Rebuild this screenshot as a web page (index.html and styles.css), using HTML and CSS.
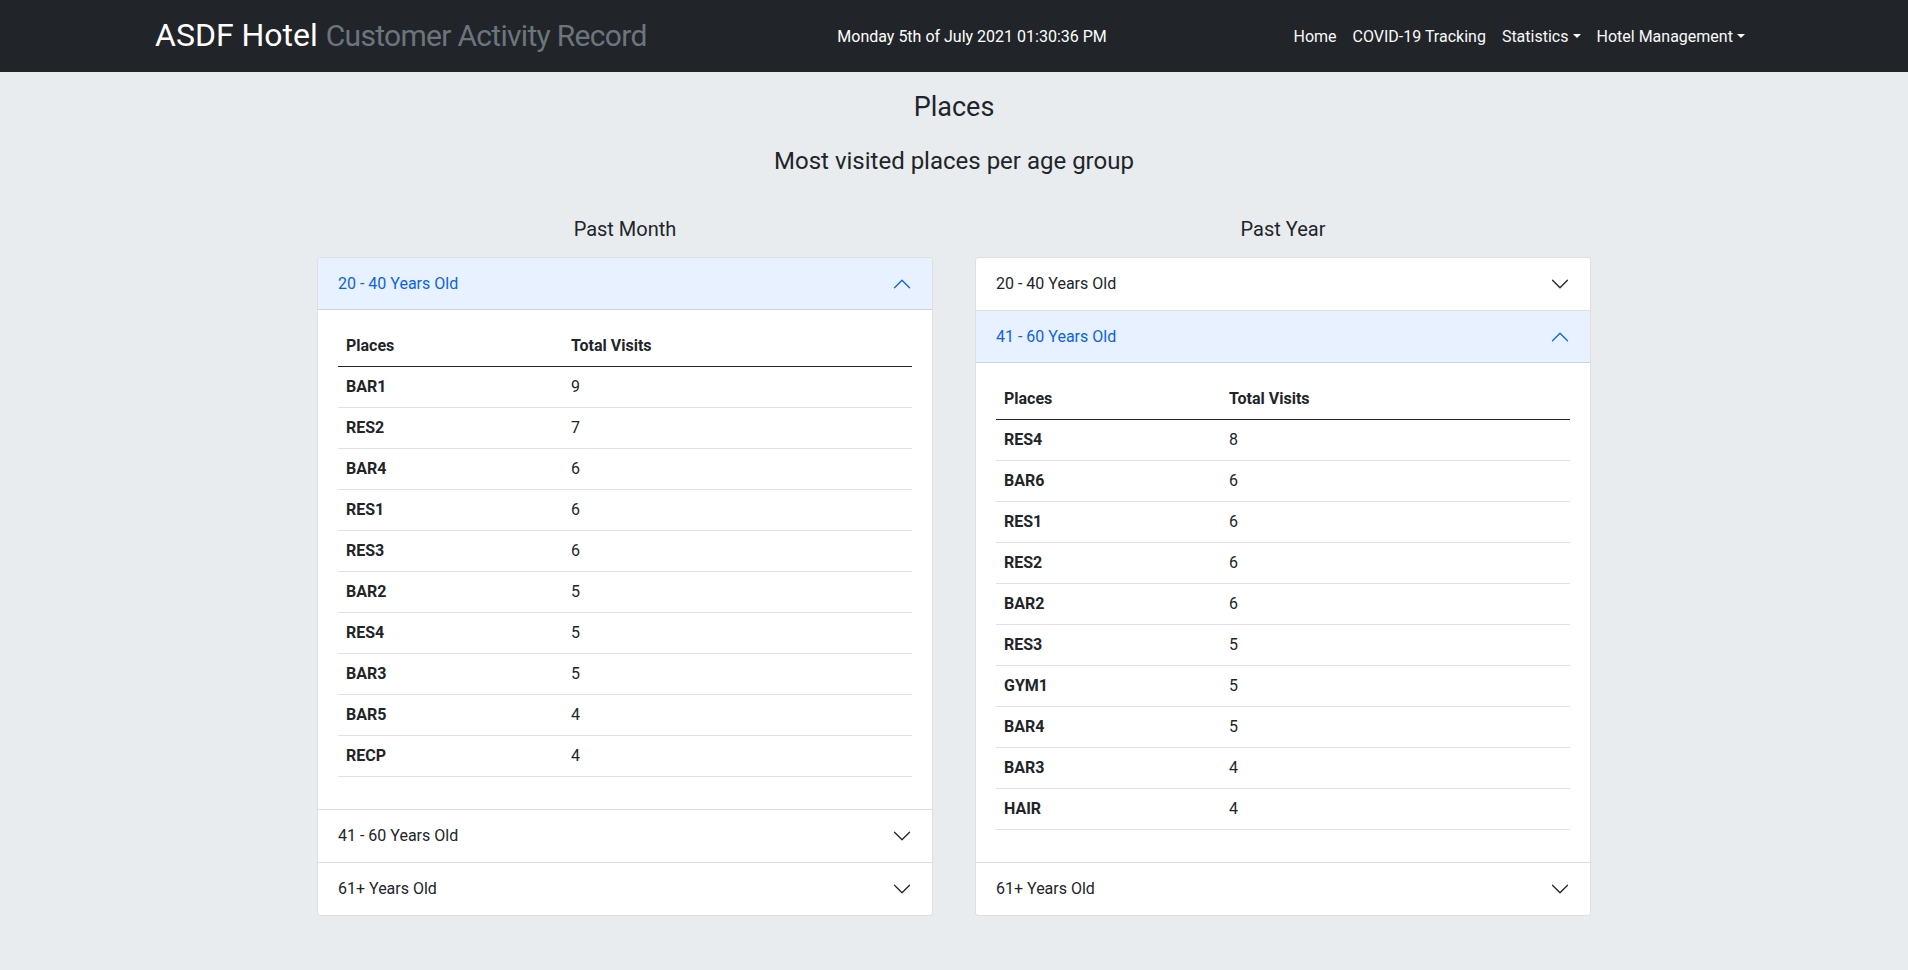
FILE: index.html
```html
<!DOCTYPE html>
<html lang="en">
<head>
<meta charset="utf-8">
<title>ASDF Hotel - Places</title>
<link rel="stylesheet" href="styles.css">
</head>
<body>
<nav class="navbar">
  <div class="nav-inner">
    <a class="brand" href="#">ASDF Hotel <span class="brand-sub">Customer Activity Record</span></a>
    <div class="clock">Monday 5th of July 2021 01:30:36 PM</div>
    <ul class="nav-links">
      <li><a class="nav-link" href="#">Home</a></li>
      <li><a class="nav-link" href="#">COVID-19 Tracking</a></li>
      <li><a class="nav-link dropdown" href="#">Statistics</a></li>
      <li><a class="nav-link dropdown" href="#">Hotel Management</a></li>
    </ul>
  </div>
</nav>

<main class="page">
  <h2 class="title">Places</h2>
  <h4 class="subtitle">Most visited places per age group</h4>

  <div class="columns">
    <section class="column">
      <h5 class="col-title">Past Month</h5>
      <div class="accordion">
        <div class="acc-item">
          <button class="acc-btn active">20 - 40 Years Old
            <svg class="chev" viewBox="0 0 16 16"><path d="M1.646 4.646a.5.5 0 0 1 .708 0L8 10.293l5.646-5.647a.5.5 0 0 1 .708.708l-6 6a.5.5 0 0 1-.708 0l-6-6a.5.5 0 0 1 0-.708z"/></svg>
          </button>
          <div class="acc-body">
            <table class="table">
              <thead><tr><th class="c1">Places</th><th>Total Visits</th></tr></thead>
              <tbody>
                <tr><th>BAR1</th><td>9</td></tr>
                <tr><th>RES2</th><td>7</td></tr>
                <tr><th>BAR4</th><td>6</td></tr>
                <tr><th>RES1</th><td>6</td></tr>
                <tr><th>RES3</th><td>6</td></tr>
                <tr><th>BAR2</th><td>5</td></tr>
                <tr><th>RES4</th><td>5</td></tr>
                <tr><th>BAR3</th><td>5</td></tr>
                <tr><th>BAR5</th><td>4</td></tr>
                <tr><th>RECP</th><td>4</td></tr>
              </tbody>
            </table>
          </div>
        </div>
        <div class="acc-item">
          <button class="acc-btn">41 - 60 Years Old
            <svg class="chev" viewBox="0 0 16 16"><path d="M1.646 4.646a.5.5 0 0 1 .708 0L8 10.293l5.646-5.647a.5.5 0 0 1 .708.708l-6 6a.5.5 0 0 1-.708 0l-6-6a.5.5 0 0 1 0-.708z"/></svg>
          </button>
        </div>
        <div class="acc-item">
          <button class="acc-btn">61+ Years Old
            <svg class="chev" viewBox="0 0 16 16"><path d="M1.646 4.646a.5.5 0 0 1 .708 0L8 10.293l5.646-5.647a.5.5 0 0 1 .708.708l-6 6a.5.5 0 0 1-.708 0l-6-6a.5.5 0 0 1 0-.708z"/></svg>
          </button>
        </div>
      </div>
    </section>

    <section class="column">
      <h5 class="col-title">Past Year</h5>
      <div class="accordion">
        <div class="acc-item">
          <button class="acc-btn">20 - 40 Years Old
            <svg class="chev" viewBox="0 0 16 16"><path d="M1.646 4.646a.5.5 0 0 1 .708 0L8 10.293l5.646-5.647a.5.5 0 0 1 .708.708l-6 6a.5.5 0 0 1-.708 0l-6-6a.5.5 0 0 1 0-.708z"/></svg>
          </button>
        </div>
        <div class="acc-item">
          <button class="acc-btn active">41 - 60 Years Old
            <svg class="chev" viewBox="0 0 16 16"><path d="M1.646 4.646a.5.5 0 0 1 .708 0L8 10.293l5.646-5.647a.5.5 0 0 1 .708.708l-6 6a.5.5 0 0 1-.708 0l-6-6a.5.5 0 0 1 0-.708z"/></svg>
          </button>
          <div class="acc-body">
            <table class="table">
              <thead><tr><th class="c1">Places</th><th>Total Visits</th></tr></thead>
              <tbody>
                <tr><th>RES4</th><td>8</td></tr>
                <tr><th>BAR6</th><td>6</td></tr>
                <tr><th>RES1</th><td>6</td></tr>
                <tr><th>RES2</th><td>6</td></tr>
                <tr><th>BAR2</th><td>6</td></tr>
                <tr><th>RES3</th><td>5</td></tr>
                <tr><th>GYM1</th><td>5</td></tr>
                <tr><th>BAR4</th><td>5</td></tr>
                <tr><th>BAR3</th><td>4</td></tr>
                <tr><th>HAIR</th><td>4</td></tr>
              </tbody>
            </table>
          </div>
        </div>
        <div class="acc-item">
          <button class="acc-btn">61+ Years Old
            <svg class="chev" viewBox="0 0 16 16"><path d="M1.646 4.646a.5.5 0 0 1 .708 0L8 10.293l5.646-5.647a.5.5 0 0 1 .708.708l-6 6a.5.5 0 0 1-.708 0l-6-6a.5.5 0 0 1 0-.708z"/></svg>
          </button>
        </div>
      </div>
    </section>
  </div>
</main>
</body>
</html>
```

FILE: styles.css
```css
* { box-sizing: border-box; }

html, body {
  margin: 0;
  padding: 0;
}

body {
  font-family: Roboto, "Liberation Sans", sans-serif;
  font-size: 16px;
  line-height: 1.5;
  color: #212529;
  background: #e9ecef;
  min-height: 970px;
}

/* ---------- Navbar ---------- */
.navbar {
  background: #212529;
  height: 72px;
}

.nav-inner {
  height: 72px;
  margin: 0 155px;
  padding-top: 2px;
  display: flex;
  align-items: center;
}

.brand {
  color: #fff;
  text-decoration: none;
  font-size: 32px;
  line-height: 40px;
  white-space: nowrap;
  margin-top: -4px;
}

.brand-sub {
  color: #6c757d;
  font-size: 30px;
  letter-spacing: -0.7px;
}

.clock {
  flex: 1;
  text-align: center;
  color: #fff;
  padding-left: 12px;
  white-space: nowrap;
}

.nav-links {
  list-style: none;
  margin: 0;
  padding: 0;
  display: flex;
}

.nav-link {
  display: block;
  padding: 8px;
  color: #f8f9fa;
  text-decoration: none;
  white-space: nowrap;
}

.dropdown::after {
  content: "";
  display: inline-block;
  margin-left: .255em;
  vertical-align: .255em;
  border-top: .3em solid;
  border-right: .3em solid transparent;
  border-left: .3em solid transparent;
  border-bottom: 0;
}

/* ---------- Page ---------- */
.page {
  display: flex;
  flex-direction: column;
  align-items: center;
}

.title {
  margin: 16px 0 0;
  font-size: 27px;
  line-height: 38px;
  font-weight: 400;
}

.subtitle {
  margin: 21px 0 0;
  font-size: 24px;
  line-height: 29px;
  font-weight: 400;
}

.columns {
  display: flex;
  gap: 42px;
  margin-top: 41px;
}

.column {
  width: 616px;
}

.col-title {
  margin: 0 0 16px;
  text-align: center;
  font-size: 20px;
  line-height: 24px;
  font-weight: 400;
}

/* ---------- Accordion ---------- */
.accordion {
  background: #fff;
  border: 1px solid rgba(0, 0, 0, .125);
  border-radius: 4px;
  overflow: hidden;
}

.acc-item + .acc-item {
  border-top: 1px solid rgba(0, 0, 0, .125);
}

.acc-btn {
  display: flex;
  align-items: center;
  width: 100%;
  padding: 14px 20px;
  border: 0;
  background: #fff;
  color: #212529;
  font: inherit;
  line-height: 24px;
  text-align: left;
  cursor: pointer;
}

.acc-btn.active {
  background: #e7f1ff;
  color: #0c63e4;
  box-shadow: inset 0 -1px 0 rgba(0, 0, 0, .125);
}

.chev {
  width: 20px;
  height: 20px;
  margin-left: auto;
  fill: #212529;
  flex-shrink: 0;
}

.acc-btn.active .chev {
  fill: #0c63e4;
  transform: rotate(180deg);
}

.acc-body {
  padding: 16px 20px;
}

/* ---------- Table ---------- */
.table {
  width: 100%;
  table-layout: fixed;
  border-collapse: collapse;
  margin-bottom: 16px;
}

.table th,
.table td {
  padding: 8px;
  text-align: left;
  line-height: 24px;
  border-bottom: 1px solid #dee2e6;
}

.table th {
  font-weight: 700;
}

.table thead th {
  border-bottom: 1px solid #212529;
}

.table .c1 {
  width: 225px;
}
```
